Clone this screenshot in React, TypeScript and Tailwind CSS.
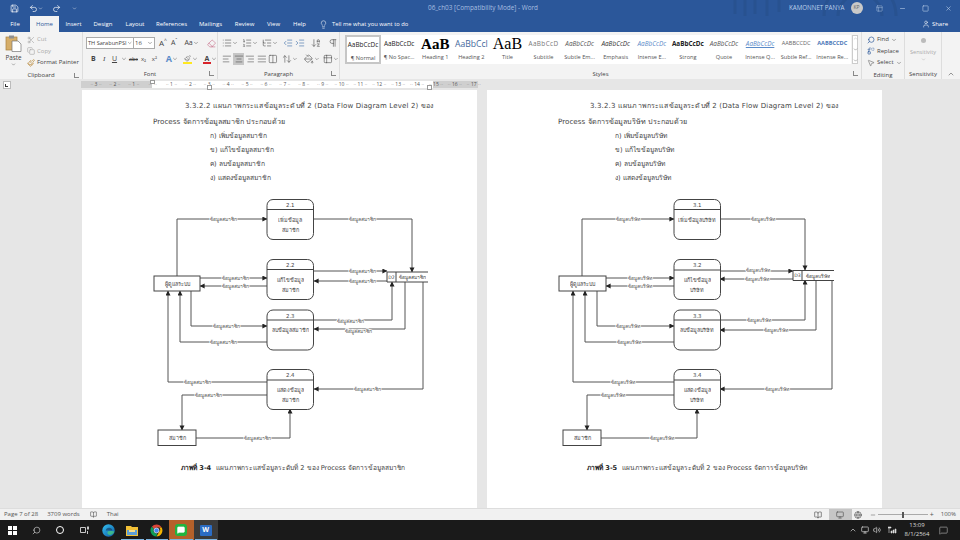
import {
  AlignCenter, AlignJustify, AlignLeft, AlignRight, ArrowDownAZ, BookOpen, ChevronDown, ChevronUp, Copy, Columns2,
  Indent, Layout, Lightbulb, List, ListOrdered, ListTree, Minus, MessageSquare, Monitor, MousePointer2,
  Outdent, Paintbrush, PaintBucket, Pilcrow, Redo2, Replace, Save, Scissors, Search, Square, Table2, Undo2, User,
  Volume2, X, Eraser, Globe, ArrowUpDown,
} from "lucide-react";

const ui = { fontFamily: '"Open Sans", "Liberation Sans", sans-serif' };
const docFont = { fontFamily: '"DejaVu Sans", "Noto Sans", "Noto Sans CJK SC", sans-serif' };

const tabs = [
  { name: "File", w: "w-[30px]" },
  { name: "Home", w: "w-[29px]", active: true },
  { name: "Insert", w: "w-[29px]" },
  { name: "Design", w: "w-[30px]" },
  { name: "Layout", w: "w-[34px]" },
  { name: "References", w: "w-[39px]" },
  { name: "Mailings", w: "w-[39px]" },
  { name: "Review", w: "w-[29px]" },
  { name: "View", w: "w-[29px]" },
  { name: "Help", w: "w-[23px]" },
];

const styles = [
  { s: "AaBbCcDc", l: "¶ Normal", c: "text-[6.4px] text-[#222]", sel: true },
  { s: "AaBbCcDc", l: "¶ No Spac...", c: "text-[6.4px] text-[#222]" },
  { s: "AaB", l: "Heading 1", c: "text-[15px] font-bold text-black [font-family:'Liberation_Serif']" },
  { s: "AaBbCcl", l: "Heading 2", c: "text-[8.6px] text-[#44699c]" },
  { s: "AaB", l: "Title", c: "text-[16px] text-black [font-family:'Liberation_Serif']" },
  { s: "AaBbCcD", l: "Subtitle", c: "text-[6.4px] text-[#777] tracking-[0.4px]" },
  { s: "AaBbCcDc", l: "Subtle Em...", c: "text-[6.4px] italic text-[#555]" },
  { s: "AaBbCcDc", l: "Emphasis", c: "text-[6.4px] italic text-[#333]" },
  { s: "AaBbCcDc", l: "Intense E...", c: "text-[6.4px] italic text-[#5b8bc9]" },
  { s: "AaBbCcDc", l: "Strong", c: "text-[6.4px] font-bold text-[#222]" },
  { s: "AaBbCcDc", l: "Quote", c: "text-[6.4px] italic text-[#555]" },
  { s: "AaBbCcDc", l: "Intense Q...", c: "text-[6.4px] italic text-[#5b8bc9] underline" },
  { s: "AABBCCDC", l: "Subtle Ref...", c: "text-[5.6px] text-[#666]" },
  { s: "AABBCCDC", l: "Intense Re...", c: "text-[5.6px] font-bold text-[#4a78b8]" },
];

type Flow = { d: string; x: number; y: number };
type Box = { x: number; y: number; no: string; lines: string[]; head: number };

const procW = 46.5;

const dfd1 = {
  left: 82,
  label: "ข้อมูลสมาชิก",
  flows: [
    { d: "M177 276V219H267", x: 223, y: 219 },
    { d: "M314 219H412V272", x: 362, y: 219 },
    { d: "M200 278H267", x: 235, y: 278 },
    { d: "M267 286H200", x: 235, y: 286 },
    { d: "M314 271H387", x: 362, y: 271 },
    { d: "M387 281H314", x: 362, y: 281 },
    { d: "M314 320H392V282", x: 350, y: 321 },
    { d: "M405 282V329H314", x: 358, y: 331 },
    { d: "M191 291V326H267", x: 226, y: 326 },
    { d: "M267 342H180V291", x: 223, y: 342 },
    { d: "M267 382H168V291", x: 197, y: 382 },
    { d: "M267 395H182V430", x: 208, y: 395 },
    { d: "M196 438H290V409", x: 257, y: 438 },
    { d: "M423 282V389H314", x: 367, y: 389 },
  ] as Flow[],
  procs: [
    { x: 267, y: 199.5, no: "2.1", lines: ["เพิ่มข้อมูล", "สมาชิก"], head: 209.5 },
    { x: 267, y: 259.5, no: "2.2", lines: ["แก้ไขข้อมูล", "สมาชิก"], head: 269.5 },
    { x: 267, y: 310, no: "2.3", lines: ["ลบข้อมูลสมาชิก"], head: 320 },
    { x: 267, y: 369.5, no: "2.4", lines: ["แสดงข้อมูล", "สมาชิก"], head: 380 },
  ] as Box[],
  admin: { x: 154, w: 46 },
  member: { x: 158, w: 38 },
  store: { x: 387, end: 428, y: 272, id: "D2", name: "ข้อมูลสมาชิก" },
};

const dfd2 = {
  left: 487,
  label: "ข้อมูลบริษัท",
  flows: [
    { d: "M582 276V219H674", x: 628, y: 219 },
    { d: "M720 219H805V270", x: 763, y: 219 },
    { d: "M606 278H674", x: 640, y: 278 },
    { d: "M674 286H606", x: 640, y: 286 },
    { d: "M720 271H793", x: 758, y: 270 },
    { d: "M793 279H720", x: 757, y: 279 },
    { d: "M720 320H805V280", x: 759, y: 320 },
    { d: "M816 280V330H720", x: 776, y: 330 },
    { d: "M597 291V326H674", x: 628, y: 326 },
    { d: "M674 342H585V291", x: 629, y: 342 },
    { d: "M674 382H573V291", x: 623, y: 382 },
    { d: "M674 395H587V430", x: 613, y: 395 },
    { d: "M601 438H697V409", x: 662, y: 438 },
    { d: "M832 280V389H720", x: 777, y: 389 },
  ] as Flow[],
  procs: [
    { x: 674, y: 199.5, no: "3.1", lines: ["เพิ่มข้อมูลบริษัท"], head: 209.5 },
    { x: 674, y: 259.5, no: "3.2", lines: ["แก้ไขข้อมูล", "บริษัท"], head: 270 },
    { x: 674, y: 310, no: "3.3", lines: ["ลบข้อมูลบริษัท"], head: 320 },
    { x: 674, y: 369.5, no: "3.4", lines: ["แสดงข้อมูล", "บริษัท"], head: 380 },
  ] as Box[],
  admin: { x: 559, w: 47 },
  member: { x: 563, w: 38 },
  store: { x: 793, end: 834, y: 270.5, id: "D3", name: "ข้อมูลบริษัท" },
};

function Diagram({ data, id }: { data: typeof dfd1; id: string }) {
  const { left, label, flows, procs, admin, member, store } = data;
  return (
    <svg width={395} height={265} viewBox={`${left} 190 395 265`} className="block" style={docFont}>
      <defs>
        <marker id={id} markerWidth="6" markerHeight="6" refX="4.6" refY="2.5" orient="auto">
          <path d="M0 0L5 2.5L0 5Z" fill="#222" />
        </marker>
      </defs>
      {flows.map((f, i) => (
        <path key={i} d={f.d} fill="none" stroke="#555" strokeWidth="1" markerEnd={`url(#${id})`} />
      ))}
      <g opacity="0.99">
        {flows.map((f, i) => (
          <text key={i} x={f.x} y={f.y} fontSize="5" fill="#555" textAnchor="middle" dominantBaseline="central" stroke="#fff" strokeWidth="1.5" paintOrder="stroke">
            {label}
          </text>
        ))}
      </g>
      {procs.map((p) => (
        <g key={p.no}>
          <rect x={p.x} y={p.y} width={procW} height={40} rx="6" fill="#fff" stroke="#444" />
          <line x1={p.x} x2={p.x + procW} y1={p.head} y2={p.head} stroke="#444" />
          <g opacity="0.99">
            <text x={p.x + procW / 2} y={p.y + 5.5} fontSize="5.4" fill="#444" textAnchor="middle" dominantBaseline="central">{p.no}</text>
            {p.lines.map((l, i) => (
              <text key={i} x={p.x + procW / 2} y={p.head + 10 + i * 10} fontSize="5.4" fill="#444" textAnchor="middle" dominantBaseline="central">{l}</text>
            ))}
          </g>
        </g>
      ))}
      <rect x={admin.x} y={276} width={admin.w} height={15} fill="#fff" stroke="#444" />
      <rect x={member.x} y={430} width={member.w} height={15.5} fill="#fff" stroke="#444" />
      <rect x={store.x} y={store.y} width={store.end - store.x} height={10} fill="#fff" stroke="none" />
      <path d={`M${store.end} ${store.y}H${store.x}V${store.y + 10}H${store.end}M${store.x + 9} ${store.y}V${store.y + 10}`} fill="none" stroke="#444" />
      <g opacity="0.99" fill="#444" textAnchor="middle" dominantBaseline="central">
        <text x={admin.x + admin.w / 2} y={283.5} fontSize="5.4">ผู้ดูแลระบบ</text>
        <text x={member.x + member.w / 2} y={438} fontSize="5.4">สมาชิก</text>
        <text x={store.x + 4.5} y={store.y + 5} fontSize="4.6">{store.id}</text>
        <text x={store.x + 25} y={store.y + 5} fontSize="5">{store.name}</text>
      </g>
    </svg>
  );
}

function Page({ no, word, data, id, figure, capPad }: {
  no: string; word: string; data: typeof dfd1; id: string; figure: string; capPad: string;
}) {
  const items = [`ก) เพิ่มข้อมูล${word}`, `ข) แก้ไขข้อมูล${word}`, `ค) ลบข้อมูล${word}`, `ง) แสดงข้อมูล${word}`];
  return (
    <div className="w-[395px] h-[418px] bg-white shrink-0 flex flex-col pt-[9px] text-[#444] overflow-hidden" style={docFont}>
      <div className="pl-[103px] h-[16px] text-[7px] leading-[15px] whitespace-nowrap tracking-[0.15px]">
        {no} แผนภาพกระแสข้อมูลระดับที่ 2 (Data Flow Diagram Level 2) ของ
      </div>
      <div className="pl-[71px] h-[14px] text-[7.2px] leading-[14px] whitespace-nowrap">Process จัดการข้อมูล{word} ประกอบด้วย</div>
      {items.map((t) => (
        <div key={t} className="pl-[128px] h-[14px] text-[6.7px] leading-[14px] whitespace-nowrap">{t}</div>
      ))}
      <div className="mt-[5px]">
        <Diagram data={data} id={id} />
      </div>
      <div className={`${capPad} mt-[6px] text-[6.6px] leading-[14px] whitespace-nowrap`}>
        <span className="font-bold text-[#222]">ภาพที่ {figure}</span>
        <span className="ml-[5px]">แผนภาพกระแสข้อมูลระดับที่ 2 ของ Process จัดการข้อมูล{word}</span>
      </div>
    </div>
  );
}

function GroupLabel({ text, launcher }: { text: string; launcher?: boolean }) {
  return (
    <div className="h-[12px] pt-[2px] flex items-center justify-center relative text-[6px] text-[#444]">
      {text}
      {launcher && <span className="absolute right-[3px] top-[4px] w-[5px] h-[5px] border-l border-b border-[#888]" />}
    </div>
  );
}

function Ruler() {
  const nums = [3, 2, 1, 0, 1, 2, 3, 4, 5, 6, 7, 8, 9, 10, 11, 12, 13, 14, 15, 16, 17];
  return (
    <div className="h-[11px] bg-[#e6e6e6] flex items-center shrink-0">
      <div className="w-[11px] flex justify-end">
        <div className="w-[8px] h-[8px] bg-white border border-[#bbb] flex items-end justify-start">
          <span className="w-[3px] h-[3px] ml-[1px] mb-[1px] border-l border-b border-[#333]" />
        </div>
      </div>
      <div className="ml-[70px] w-[397px] h-[7px] pl-[5.5px] flex relative bg-[linear-gradient(90deg,#cfcfcf_0,#cfcfcf_71px,#fff_71px,#fff_352px,#cfcfcf_352px)]">
        {nums.map((n, i) => (
          <div key={i} className="w-[18.9px] shrink-0 flex items-center justify-center text-[5px] leading-none text-[#555]">
            <span className="mr-[1.5px] text-[#888]">··</span>
            {n === 0 ? "" : n}
            <span className="ml-[1.5px] text-[#888]">··</span>
          </div>
        ))}
        <span className="absolute left-[69px] -top-[1px] w-[5px] h-[4px] bg-white border border-[#999]" />
        <span className="absolute left-[126px] top-[4px] w-[5px] h-[5px] bg-white border border-[#999]" />
        <span className="absolute left-[346px] top-[4px] w-[5px] h-[5px] bg-white border border-[#999]" />
      </div>
    </div>
  );
}

function Edge() {
  return (
    <svg width="13" height="13" viewBox="0 0 24 24">
      <defs>
        <linearGradient id="edgeG" x1="0" y1="0" x2="1" y2="1">
          <stop offset="0" stopColor="#35c1f1" />
          <stop offset="1" stopColor="#0c59a4" />
        </linearGradient>
      </defs>
      <circle cx="12" cy="12" r="11.5" fill="url(#edgeG)" />
      <path d="M23 14c-2 6-9 8-12 5-2-2-1-6 3-6 3 0 6-1 9 1z" fill="#4bd07a" opacity="0.7" />
      <path d="M7 13c0-4 3-6 6-6s6 2 6 5H11c-2 0-4 0-4 1z" fill="#12294a" opacity="0.55" />
    </svg>
  );
}

function Chrome() {
  return (
    <svg width="13" height="13" viewBox="0 0 24 24">
      <path d="M12 1a11 11 0 0 1 9.5 5.5H12a5.5 5.5 0 0 0-5 3L3.6 4.8A11 11 0 0 1 12 1z" fill="#db4437" />
      <path d="M21.5 6.5A11 11 0 0 1 12 23l5-8.5a5.5 5.5 0 0 0-.2-8z" fill="#f4b400" />
      <path d="M12 23A11 11 0 0 1 3.6 4.8L7 9.5a5.5 5.5 0 0 0 6 8z" fill="#0f9d58" />
      <circle cx="12" cy="12" r="4.6" fill="#4285f4" stroke="#fff" strokeWidth="1.3" />
    </svg>
  );
}

function TaskSlot({ bg, line, children }: { bg?: string; line?: boolean; children: React.ReactNode }) {
  return (
    <div className={`w-[24.5px] h-[20px] flex items-center justify-center relative ${bg ?? ""}`}>
      {children}
      {line && <span className="absolute bottom-0 left-[1px] right-[1px] h-[1px] bg-[#7db4e0]" />}
    </div>
  );
}

function Caret() {
  return <ChevronDown size={6} strokeWidth={2} className="text-[#555]" />;
}

export default function App() {
  const p = { size: 10, strokeWidth: 1.5, className: "text-[#555]" };
  return (
    <div className="w-[960px] h-[540px] flex flex-col overflow-hidden bg-[#e6e6e6]" style={ui}>
      {/* title bar */}
      <div className="h-[16px] bg-[#2b579a] flex items-center relative shrink-0 text-white">
        <svg width="190" height="32" viewBox="0 0 190 32" className="absolute left-[725px] top-0" fill="none" stroke="#285290" strokeWidth="3">
          <circle cx="135" cy="16" r="22" />
          <circle cx="135" cy="16" r="36" />
          <path d="M10 0V14M20 0V18M30 0V14M42 0V18M54 0V12" />
        </svg>
        <div className="w-[428px] flex items-center pl-[10px] gap-[8px] relative">
          <Save size={9} strokeWidth={1.8} />
          <div className="flex items-center ml-[2px]"><Undo2 size={9} strokeWidth={1.8} /><ChevronDown size={5} /></div>
          <Redo2 size={9} strokeWidth={1.8} className="ml-[1px]" />
          <ChevronDown size={5} className="ml-[3px]" />
        </div>
        <div className="w-[104px] text-center text-[6.4px] text-[#a9bfe0] whitespace-nowrap relative">06_ch03 [Compatibility Mode]  -  Word</div>
        <div className="flex-1 flex items-center justify-end text-[#bcd0ea] relative">
          <span className="text-[6.2px] mr-[6px] whitespace-nowrap">KAMONNET PANYA</span>
          <span className="w-[12px] h-[12px] rounded-full bg-[#c9c9c9] text-[#666] text-[5px] flex items-center justify-center mr-[13px]">KP</span>
          <Layout size={7} strokeWidth={1.5} className="mr-[16px]" />
          <Minus size={7} className="mr-[16px]" />
          <Square size={7} className="mr-[16px]" />
          <X size={7} className="mr-[8.5px]" />
        </div>
      </div>
      {/* tabs */}
      <div className="h-[16px] bg-[#2b579a] flex items-end shrink-0 text-[6px] text-white relative">
        {tabs.map((t) => (
          <div key={t.name} className={`${t.w} h-[16px] flex items-center justify-center ${t.active ? "bg-[#f3f3f3] text-[#2b579a]" : ""}`}>{t.name}</div>
        ))}
        <div className="ml-[8px] h-[16px] flex items-center gap-[4px] text-[5.8px]">
          <Lightbulb size={9} strokeWidth={1.4} />
          <span className="whitespace-nowrap">Tell me what you want to do</span>
        </div>
        <div className="ml-auto mr-[12px] h-[16px] flex items-center gap-[2px]">
          <User size={8} strokeWidth={1.6} />Share
        </div>
      </div>
      {/* ribbon */}
      <div className="h-[47px] bg-[#f3f3f3] flex shrink-0 text-[6px] text-[#444]">
        {/* clipboard */}
        <div className="w-[83px] flex flex-col border-r border-[#ddd]">
          <div className="flex-1 flex">
            <div className="w-[27px] flex flex-col items-center pt-[3px]">
              <svg width="17" height="17" viewBox="0 0 17 17">
                <rect x="1" y="2" width="11" height="13" fill="#d6ae6a" stroke="#a9803f" strokeWidth="0.7" />
                <rect x="4" y="0.5" width="5" height="3" fill="#8f8f8f" />
                <path d="M7 6h6l3 3v7.5H7z" fill="#fff" stroke="#777" strokeWidth="0.7" />
              </svg>
              <span className="mt-[3px] leading-none text-[6.3px]">Paste</span>
              <ChevronDown size={5} className="mt-[1px]" />
            </div>
            <div className="flex flex-col pt-[2px] leading-[11.5px]">
              <div className="flex items-center gap-[2px] text-[#aaa]"><Scissors size={8} />Cut</div>
              <div className="flex items-center gap-[2px] text-[#aaa]"><Copy size={8} />Copy</div>
              <div className="flex items-center gap-[2px] whitespace-nowrap"><Paintbrush size={8} className="text-[#b98b3e]" />Format Painter</div>
            </div>
          </div>
          <GroupLabel text="Clipboard" launcher />
        </div>
        {/* font */}
        <div className="w-[135px] flex flex-col border-r border-[#ddd]">
          <div className="flex-1 flex flex-col pt-[5px] pl-[3px] gap-[4px]">
            <div className="flex items-center h-[12px]">
              <div className="w-[48px] h-[12px] bg-white border border-[#aaa] flex items-center justify-between px-[1px] text-[5.6px] whitespace-nowrap overflow-hidden">TH SarabunPSI<Caret /></div>
              <div className="w-[21px] h-[12px] bg-white border border-l-0 border-[#aaa] flex items-center justify-between px-[1px]">16<Caret /></div>
              <span className="ml-[4px] text-[8px]">A</span><span className="text-[5px] -mt-[4px]">^</span>
              <span className="ml-[4px] text-[7px]">A</span><span className="text-[5px] -mt-[4px]">ˇ</span>
              <span className="ml-[7px] text-[7px]">Aa</span><Caret />
              <Eraser size={9} strokeWidth={1.5} className="ml-[8px] text-[#c2607f]" />
            </div>
            <div className="flex items-center h-[12px] pl-[5px] text-[7px] text-[#444]">
              <b className="w-[12px]">B</b>
              <i className="w-[9px] [font-family:'Liberation_Serif']">I</i>
              <u className="w-[9px]">U</u><Caret />
              <span className="ml-[2px] w-[12px] text-[5.5px] line-through">abc</span>
              <span className="w-[11px] text-[6px]">x₂</span>
              <span className="w-[11px] text-[6px]">x²</span>
              <span className="ml-[3px] text-[9px] font-bold text-[#5b8bc9]">A</span><Caret />
              <span className="ml-[5px] w-[9px] h-[9px] flex flex-col items-center">
                <Paintbrush size={7} strokeWidth={1.6} className="text-[#666]" /><span className="w-[9px] h-[2px] bg-[#ffe81f]" />
              </span><Caret />
              <span className="ml-[5px] flex flex-col items-center leading-[7px] font-bold text-[#444]">A<span className="w-[8px] h-[2px] bg-[#d8232a]" /></span><Caret />
            </div>
          </div>
          <GroupLabel text="Font" launcher />
        </div>
        {/* paragraph */}
        <div className="w-[122px] flex flex-col border-r border-[#ddd]">
          <div className="flex-1 flex flex-col pt-[5px] pl-[4px] gap-[4px]">
            <div className="flex items-center h-[12px]">
              <List {...p} /><Caret />
              <span className="w-[4px]" /><ListOrdered {...p} /><Caret />
              <span className="w-[4px]" /><ListTree {...p} /><Caret />
              <span className="w-[5px]" /><Outdent {...p} className="text-[#3f6fa8]" />
              <span className="w-[2px]" /><Indent {...p} className="text-[#3f6fa8]" />
              <span className="w-[6px]" /><ArrowDownAZ {...p} />
              <span className="w-[7px]" /><Pilcrow {...p} />
            </div>
            <div className="flex items-center h-[12px]">
              <AlignLeft {...p} />
              <span className="w-[12px] h-[12px] bg-[#c6c6c6] flex items-center justify-center mx-[1px]"><AlignCenter {...p} /></span>
              <AlignRight {...p} />
              <span className="w-[2px]" /><AlignJustify {...p} />
              <span className="w-[1px]" /><Columns2 {...p} />
              <span className="w-[5px]" /><ArrowUpDown {...p} /><Caret />
              <span className="w-[6px]" /><PaintBucket {...p} /><Caret />
              <span className="w-[4px]" /><Table2 {...p} /><Caret />
            </div>
          </div>
          <GroupLabel text="Paragraph" launcher />
        </div>
        {/* styles */}
        <div className="w-[522px] flex flex-col border-r border-[#ddd]">
          <div className="flex-1 flex pt-[3px] pl-[5px]">
            <div className="w-[506px] h-[29px] bg-white flex">
              {styles.map((st) => (
                <div key={st.l} className={`w-[36.1px] shrink-0 flex flex-col items-center overflow-hidden ${st.sel ? "border-2 border-[#c6c6c6]" : ""}`}>
                  <div className={`h-[18px] flex items-center whitespace-nowrap leading-none ${st.c}`}>{st.s}</div>
                  <div className="text-[5.6px] leading-[8px] text-[#555] whitespace-nowrap">{st.l}</div>
                </div>
              ))}
            </div>
            <div className="w-[6px] h-[29px] ml-[1px] bg-white border border-[#ccc] flex flex-col items-center justify-between text-[#555]">
              <ChevronUp size={5} className="text-[#aaa]" /><ChevronDown size={5} /><ChevronDown size={5} />
            </div>
          </div>
          <GroupLabel text="Styles" launcher />
        </div>
        {/* editing */}
        <div className="w-[43px] flex flex-col border-r border-[#ddd]">
          <div className="flex-1 flex flex-col pt-[2px] pl-[5px] leading-[11.5px]">
            <div className="flex items-center gap-[2px]"><Search size={8} className="text-[#2b579a] -scale-x-100" />Find<Caret /></div>
            <div className="flex items-center gap-[2px]"><Replace size={8} className="text-[#2b579a]" />Replace</div>
            <div className="flex items-center gap-[2px]"><MousePointer2 size={8} className="text-[#777]" />Select<Caret /></div>
          </div>
          <GroupLabel text="Editing" />
        </div>
        {/* sensitivity */}
        <div className="w-[37px] flex flex-col border-r border-[#ddd]">
          <div className="flex-1 flex flex-col items-center pt-[6px] text-[#aaa] text-[5.6px]">
            <span className="w-[5px] h-[5px] rounded-full bg-[#bbb]" />
            <span className="mt-[7px] leading-none">Sensitivity</span>
            <ChevronDown size={5} className="mt-[1px]" />
          </div>
          <GroupLabel text="Sensitivity" />
        </div>
        <div className="flex-1 flex items-end justify-center pb-[1px]"><ChevronUp size={8} className="text-[#666]" /></div>
      </div>
      <Ruler />
      {/* document */}
      <div className="flex-1 flex pl-[82px] gap-[10px] bg-[#e6e6e6] min-h-0">
        <Page no="3.3.2.2" word="สมาชิก" data={dfd1} id="arrowA" figure="3-4" capPad="pl-[99px]" />
        <Page no="3.3.2.3" word="บริษัท" data={dfd2} id="arrowB" figure="3-5" capPad="pl-[100px]" />
      </div>
      {/* status bar */}
      <div className="h-[12px] bg-[#f1f1f1] border-t border-[#ddd] flex items-center shrink-0 text-[6px] text-[#555]">
        <span className="ml-[4px]">Page 7 of 28</span>
        <span className="ml-[9px]">3709 words</span>
        <BookOpen size={7} className="ml-[10px]" />
        <span className="ml-[10px]">Thai</span>
        <div className="ml-auto flex items-center h-full">
          <BookOpen size={8} className="mr-[7px]" />
          <span className="w-[23px] h-full bg-[#c6c6c6] flex items-center justify-center"><Monitor size={8} /></span>
          <Globe size={8} className="ml-[2px] mr-[8px]" />
          <Minus size={6} />
          <span className="mx-[2px] w-[50px] h-[1px] bg-[#aaa] flex items-center justify-center"><span className="w-[2px] h-[6px] bg-[#555]" /></span>
          <span className="text-[7px] leading-none">+</span>
          <span className="ml-[7px] mr-[4px]">100%</span>
        </div>
      </div>
      {/* taskbar */}
      <div className="h-[20px] bg-[#1a1a1a] flex items-center shrink-0 text-white">
        <div className="w-[24px] flex justify-center">
          <svg width="9" height="9" viewBox="0 0 9 9"><path d="M0 0h4v4H0zM5 0h4v4H5zM0 5h4v4H0zM5 5h4v4H5z" fill="#fff" /></svg>
        </div>
        <div className="w-[24px] flex justify-center"><Search size={9} strokeWidth={1.4} className="-scale-x-100" /></div>
        <div className="w-[24px] flex justify-center"><span className="w-[8px] h-[8px] rounded-full border border-white" /></div>
        <div className="w-[24px] flex justify-center">
          <svg width="9" height="8" viewBox="0 0 9 8" fill="none" stroke="#ddd" strokeWidth="0.9"><path d="M0.5 1.5h5v5h-5zM7.5 0.5v3M7.5 5v3M8.5 0.5v3" /></svg>
        </div>
        <div className="w-[24px] flex justify-center"><Edge /></div>
        <TaskSlot line>
          <svg width="12" height="11" viewBox="0 0 12 11"><path d="M0 1h5l1 1h6v9H0z" fill="#f2c037" /><path d="M1 5h10v5H1z" fill="#5c9ed8" /><path d="M3 5h6v2H3z" fill="#f7dd8a" /></svg>
        </TaskSlot>
        <TaskSlot line><Chrome /></TaskSlot>
        <TaskSlot bg="bg-[#b5612a]" line>
          <span className="w-[12px] h-[12px] rounded-[3px] bg-[#21b53f] flex items-center justify-center"><MessageSquare size={8} fill="#fff" stroke="#fff" /></span>
        </TaskSlot>
        <TaskSlot bg="bg-[#3a3a3a]" line>
          <span className="w-[12px] h-[11px] bg-[#2b6cc4] rounded-[1px] text-[7px] font-bold flex items-center justify-center">W</span>
        </TaskSlot>
        <div className="ml-auto flex items-center gap-[4px] text-[#ddd]">
          <ChevronUp size={8} />
          <Monitor size={8} />
          <Volume2 size={8} />
          <svg width="10" height="8" viewBox="0 0 10 8" className="ml-[3px]"><path d="M0 1h3v1H0zM1 1v6M3 5h1v2H3zM5 4h1v3H5zM7 3h1v4H7z" stroke="#ddd" strokeWidth="0.6" fill="#ddd" /></svg>
          <div className="w-[30px] text-center text-[6px] leading-[9px]">
            <div>13:09</div>
            <div>8/1/2564</div>
          </div>
          <MessageSquare size={9} strokeWidth={1.3} className="ml-[2.5px] mr-[12.5px]" />
        </div>
      </div>
    </div>
  );
}
